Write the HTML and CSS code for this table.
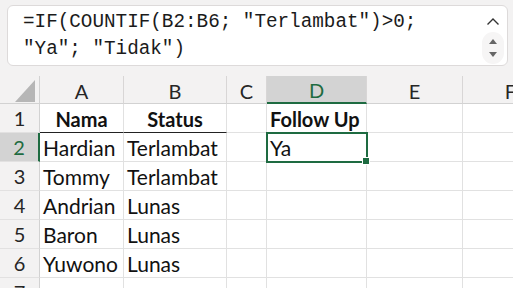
FILE: index.html
```html
<!DOCTYPE html>
<html lang="en">
<head>
    <meta charset="UTF-8">
    <meta name="viewport" content="width=device-width, initial-scale=1.0">
    <title>Follow Up</title>
    <link rel="stylesheet" href="styles.css">
</head>
<body>
    <div class="formula-area">
        <div class="formula-box">
            <div class="formula-text">=IF(COUNTIF(B2:B6; "Terlambat")&gt;0;<br>"Ya"; "Tidak")</div>
            <div class="formula-controls">
                <svg class="chevron" width="14" height="9" viewBox="0 0 14 9">
                    <path d="M1.5 7.5 L7 2 L12.5 7.5" fill="none" stroke="#333" stroke-width="1.4"/>
                </svg>
                <div class="spinner">
                    <svg width="10" height="8" viewBox="0 0 10 8"><path d="M1 7 L5 2 L9 7 Z" fill="#666"/></svg>
                    <svg width="10" height="8" viewBox="0 0 10 8"><path d="M1 1 L5 6 L9 1 Z" fill="#666"/></svg>
                </div>
            </div>
        </div>
    </div>

    <div class="sheet">
        <div class="corner"><span class="tri"></span></div>
        <div class="col-head">A</div>
        <div class="col-head">B</div>
        <div class="col-head">C</div>
        <div class="col-head active">D</div>
        <div class="col-head">E</div>
        <div class="col-head">F</div>

        <div class="row-head">1</div>
        <div class="cell bold center underline">Nama</div>
        <div class="cell bold center underline">Status</div>
        <div class="cell"></div>
        <div class="cell bold">Follow Up</div>
        <div class="cell"></div>
        <div class="cell"></div>

        <div class="row-head active">2</div>
        <div class="cell">Hardian</div>
        <div class="cell">Terlambat</div>
        <div class="cell"></div>
        <div class="cell selected">Ya<span class="handle"></span></div>
        <div class="cell"></div>
        <div class="cell"></div>

        <div class="row-head">3</div>
        <div class="cell">Tommy</div>
        <div class="cell">Terlambat</div>
        <div class="cell"></div>
        <div class="cell"></div>
        <div class="cell"></div>
        <div class="cell"></div>

        <div class="row-head">4</div>
        <div class="cell">Andrian</div>
        <div class="cell">Lunas</div>
        <div class="cell"></div>
        <div class="cell"></div>
        <div class="cell"></div>
        <div class="cell"></div>

        <div class="row-head">5</div>
        <div class="cell">Baron</div>
        <div class="cell">Lunas</div>
        <div class="cell"></div>
        <div class="cell"></div>
        <div class="cell"></div>
        <div class="cell"></div>

        <div class="row-head">6</div>
        <div class="cell">Yuwono</div>
        <div class="cell">Lunas</div>
        <div class="cell"></div>
        <div class="cell"></div>
        <div class="cell"></div>
        <div class="cell"></div>

        <div class="row-head">7</div>
        <div class="cell"></div>
        <div class="cell"></div>
        <div class="cell"></div>
        <div class="cell"></div>
        <div class="cell"></div>
        <div class="cell"></div>
    </div>
</body>
</html>
```

FILE: styles.css
```css
body {
    margin: 0;
    background-color: #f3f2f2;
    font-family: Lato, "Liberation Sans", sans-serif;
    overflow: hidden;
    width: 513px;
    height: 288px;
}
.formula-area {
    padding: 5px 5px 10px 7px;
}
.formula-box {
    height: 59px;
    background-color: white;
    border: 1px solid #dddada;
    border-radius: 6px;
    display: flex;
    justify-content: space-between;
}
.formula-text {
    font-family: "Liberation Mono", monospace;
    font-size: 19.3px;
    line-height: 27px;
    color: #1b1b1b;
    padding: 3px 0 0 15px;
}
.formula-controls {
    width: 28px;
    display: flex;
    flex-direction: column;
    align-items: center;
    padding-top: 11px;
}
.chevron {
    display: block;
}
.spinner {
    margin-top: 6px;
    width: 22px;
    height: 32px;
    border-radius: 11px;
    background-color: #f6f5f5;
    display: flex;
    flex-direction: column;
    align-items: center;
    justify-content: center;
    gap: 6px;
}
.spinner svg {
    display: block;
}
.sheet {
    display: grid;
    grid-template-columns: 40px 84px 103px 40px 100px 96px 96px;
    grid-template-rows: 28px repeat(7, 29px);
    background-color: white;
}
.corner, .col-head, .row-head {
    background-color: #f3f2f2;
    color: #262626;
    font-size: 20px;
    display: flex;
    align-items: center;
    justify-content: center;
    box-sizing: border-box;
}
.corner {
    border-right: 1px solid #d2d2d2;
    border-bottom: 1px solid #d2d2d2;
    position: relative;
}
.tri {
    position: absolute;
    right: 4px;
    bottom: 1px;
    width: 0;
    height: 0;
    border-left: 20px solid transparent;
    border-bottom: 22px solid #b6b6b6;
}
.col-head {
    border-right: 1px solid #d8d6d6;
    border-bottom: 1px solid #d2d2d2;
    padding-top: 2px;
}
.row-head {
    border-right: 1px solid #d2d2d2;
    border-bottom: 1px solid #e2e1e1;
}
.col-head.active {
    background-color: #d3d3d3;
    color: #1e6b41;
    border-bottom: 2px solid #1e6b41;
}
.row-head.active {
    background-color: #d3d3d3;
    color: #1e6b41;
    border-right: 2px solid #1e6b41;
}
.cell {
    box-sizing: border-box;
    border-right: 1px solid #e1e1e1;
    border-bottom: 1px solid #e1e1e1;
    font-size: 21px;
    color: #111;
    padding: 1px 0 0 3px;
    display: flex;
    align-items: center;
    white-space: nowrap;
    position: relative;
}
.bold {
    font-weight: bold;
    font-size: 20px;
}
.center {
    justify-content: center;
    padding-left: 0;
}
.underline {
    border-bottom: 1px solid #222;
}
.selected {
    outline: 2px solid #1e6b41;
    outline-offset: -1px;
    z-index: 1;
}
.handle {
    position: absolute;
    right: -4px;
    bottom: -4px;
    width: 6px;
    height: 6px;
    background-color: #1e6b41;
    border: 1px solid white;
}
```
